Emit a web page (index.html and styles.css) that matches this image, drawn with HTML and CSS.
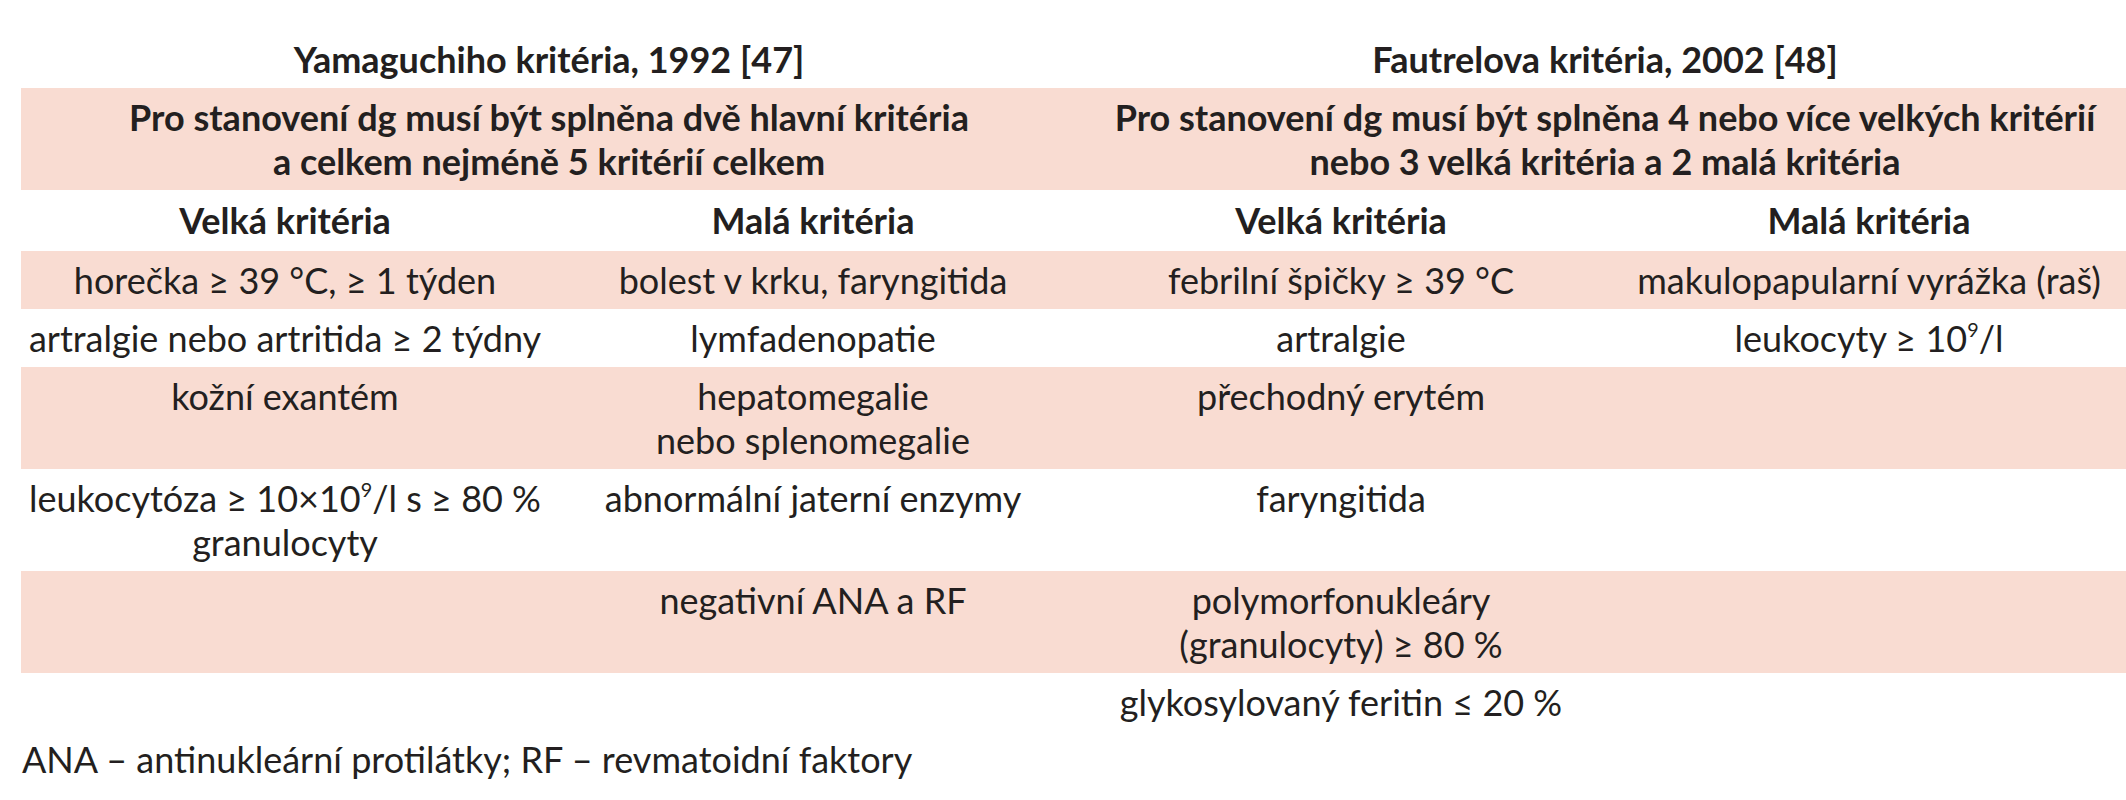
FILE: index.html
```html
<!DOCTYPE html>
<html lang="cs">
<head>
<meta charset="utf-8">
<title>Kritéria</title>
<link rel="stylesheet" href="styles.css">
</head>
<body>
<div class="page">
  <table class="criteria">
    <colgroup>
      <col class="c"><col class="c"><col class="c"><col class="c">
    </colgroup>
    <tr class="title">
      <th colspan="2">Yamaguchiho kritéria, 1992 [47]</th>
      <th colspan="2">Fautrelova kritéria, 2002 [48]</th>
    </tr>
    <tr class="pink sub">
      <th colspan="2">Pro stanovení dg musí být splněna dvě hlavní kritéria<br>a celkem nejméně 5 kritérií celkem</th>
      <th colspan="2">Pro stanovení dg musí být splněna 4 nebo více velkých kritérií<br>nebo 3 velká kritéria a 2 malá kritéria</th>
    </tr>
    <tr class="head">
      <th>Velká kritéria</th>
      <th>Malá kritéria</th>
      <th>Velká kritéria</th>
      <th>Malá kritéria</th>
    </tr>
    <tr class="pink">
      <td>horečka ≥ 39 °C, ≥ 1 týden</td>
      <td>bolest v krku, faryngitida</td>
      <td>febrilní špičky ≥ 39 °C</td>
      <td>makulopapularní vyrážka (raš)</td>
    </tr>
    <tr>
      <td>artralgie nebo artritida ≥ 2 týdny</td>
      <td>lymfadenopatie</td>
      <td>artralgie</td>
      <td>leukocyty ≥ 10<sup>9</sup>/l</td>
    </tr>
    <tr class="pink">
      <td>kožní exantém</td>
      <td>hepatomegalie<br>nebo splenomegalie</td>
      <td>přechodný erytém</td>
      <td></td>
    </tr>
    <tr>
      <td>leukocytóza ≥ 10×10<sup>9</sup>/l s ≥ 80 %<br>granulocyty</td>
      <td>abnormální jaterní enzymy</td>
      <td>faryngitida</td>
      <td></td>
    </tr>
    <tr class="pink">
      <td></td>
      <td>negativní ANA a RF</td>
      <td>polymorfonukleáry<br>(granulocyty) ≥ 80 %</td>
      <td></td>
    </tr>
    <tr>
      <td></td>
      <td></td>
      <td>glykosylovaný feritin ≤ 20 %</td>
      <td></td>
    </tr>
  </table>
  <p class="note">ANA – antinukleární protilátky; RF – revmatoidní faktory</p>
</div>
</body>
</html>
```

FILE: styles.css
```css
html, body {
  margin: 0;
  padding: 0;
  background: #ffffff;
  overflow: hidden;
}

.page {
  padding: 30px 0 0 21px;
  font-family: "Lato", "Liberation Sans", sans-serif;
  font-size: 36px;
  color: #231f20;
}

.criteria {
  width: 2112px;
  table-layout: fixed;
  border-collapse: collapse;
  border-spacing: 0;
}

.criteria .c {
  width: 528px;
}

.criteria th,
.criteria td {
  padding: 7px 4px;
  text-align: center;
  vertical-align: top;
  line-height: 44px;
  white-space: nowrap;
}

.criteria th {
  font-weight: 700;
}

.criteria .head th {
  padding: 8px 4px 9px;
}

.pink {
  background: #f9dcd2;
}

sup {
  font-size: 0.55em;
  line-height: 0;
  vertical-align: 0.75em;
}

.note {
  margin: 6px 0 0 1px;
  line-height: 44px;
}
```
